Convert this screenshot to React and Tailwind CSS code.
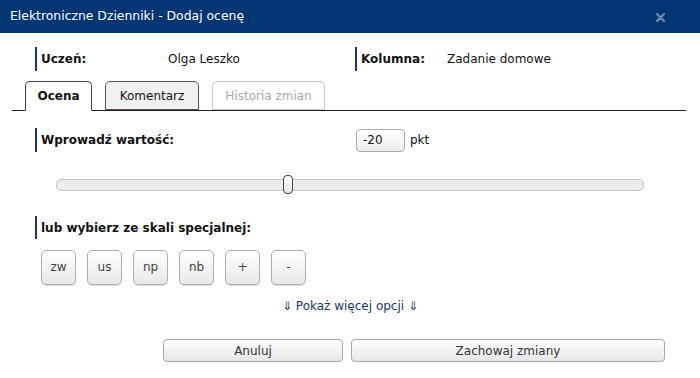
export default function App() {
  const special = ['zw', 'us', 'np', 'nb', '+', '-']

  return (
    <div className="w-[700px] h-[378px] bg-white overflow-hidden text-[12px] text-[#111] font-['DejaVu_Sans',sans-serif]">
      <header className="h-[33px] bg-[#003672] flex items-center justify-between pl-[10px] pr-[35px]">
        <span className="text-white text-[12.4px]">Elektroniczne Dzienniki - Dodaj ocenę</span>
        <svg width="9" height="9" viewBox="0 0 9 9" className="mt-[1px]">
          <path d="M1 1L8 8M8 1L1 8" stroke="#6a86b0" strokeWidth="2.4" strokeLinecap="round" />
        </svg>
      </header>

      <div className="flex items-center h-[24px] mt-[14px] pl-[35px]">
        <div className="w-[320px] flex items-center border-l-2 border-[#1a355f] h-[24px] pl-[4px]">
          <span className="w-[127px] font-bold">Uczeń:</span>
          <span>Olga Leszko</span>
        </div>
        <div className="flex items-center border-l-2 border-[#1a355f] h-[24px] pl-[4px]">
          <span className="w-[86px] font-bold">Kolumna:</span>
          <span>Zadanie domowe</span>
        </div>
      </div>

      <div className="mx-[12px] mt-[10px] w-[674px] flex items-end gap-[13px] pl-[13px] border-b border-[#222] h-[30px]">
        <div className="h-[30px] w-[67px] -mb-px bg-white border border-[#444] border-b-white rounded-t-[5px] flex items-center justify-center font-bold">Ocena</div>
        <div className="h-[29px] w-[94px] bg-[#f2f2f2] border border-[#555] rounded-t-[5px] flex items-center justify-center">Komentarz</div>
        <div className="h-[29px] w-[113px] bg-white border border-[#c8c8c8] rounded-t-[5px] flex items-center justify-center text-[#aaa]">Historia zmian</div>
      </div>

      <div className="flex items-center h-[24px] mt-[17px] pl-[35px]">
        <div className="w-[321px] border-l-2 border-[#1a355f] h-[24px] pl-[4px] flex items-center font-bold">Wprowadź wartość:</div>
        <div className="w-[49px] h-[23px] border border-[#aaa] rounded-[4px] bg-gradient-to-b from-white to-[#ececec] flex items-center pl-[6px]">-20</div>
        <span className="ml-[5px]">pkt</span>
      </div>

      <div className="relative mt-[27px] ml-[56px] w-[588px] h-[12px] rounded-[5px] bg-[#ececec] border border-[#c6c6c6]">
        <div className="absolute left-[226px] top-[-5px] w-[10px] h-[19px] rounded-[4px] border border-[#444] bg-gradient-to-b from-white to-[#e4e4e4]" />
      </div>

      <div className="flex items-center h-[23px] mt-[25px] pl-[35px]">
        <div className="border-l-2 border-[#1a355f] h-[23px] pl-[4px] flex items-center font-bold">lub wybierz ze skali specjalnej:</div>
      </div>

      <div className="flex gap-[11px] pl-[41px] mt-[11px]">
        {special.map((s) => (
          <button key={s} className="w-[35px] h-[35px] rounded-[5px] border border-[#b0b0b0] bg-gradient-to-b from-white to-[#e8e8e8] shadow-[0_1px_1px_rgba(0,0,0,0.15)] text-[#444] text-[12px] flex items-center justify-center pb-[2px]">
            {s}
          </button>
        ))}
      </div>

      <div className="text-center mt-[12px] text-[#1b3668] text-[12px]">⇓ Pokaż więcej opcji ⇓</div>

      <div className="flex gap-[8px] pl-[163px] mt-[24px]">
        <button className="w-[180px] h-[23px] rounded-[4px] border border-[#a8a8a8] bg-gradient-to-b from-white to-[#e6e6e6] text-[#333] text-[12px]">Anuluj</button>
        <button className="w-[314px] h-[23px] rounded-[4px] border border-[#a8a8a8] bg-gradient-to-b from-white to-[#e6e6e6] text-[#333] text-[12px]">Zachowaj zmiany</button>
      </div>
    </div>
  )
}
